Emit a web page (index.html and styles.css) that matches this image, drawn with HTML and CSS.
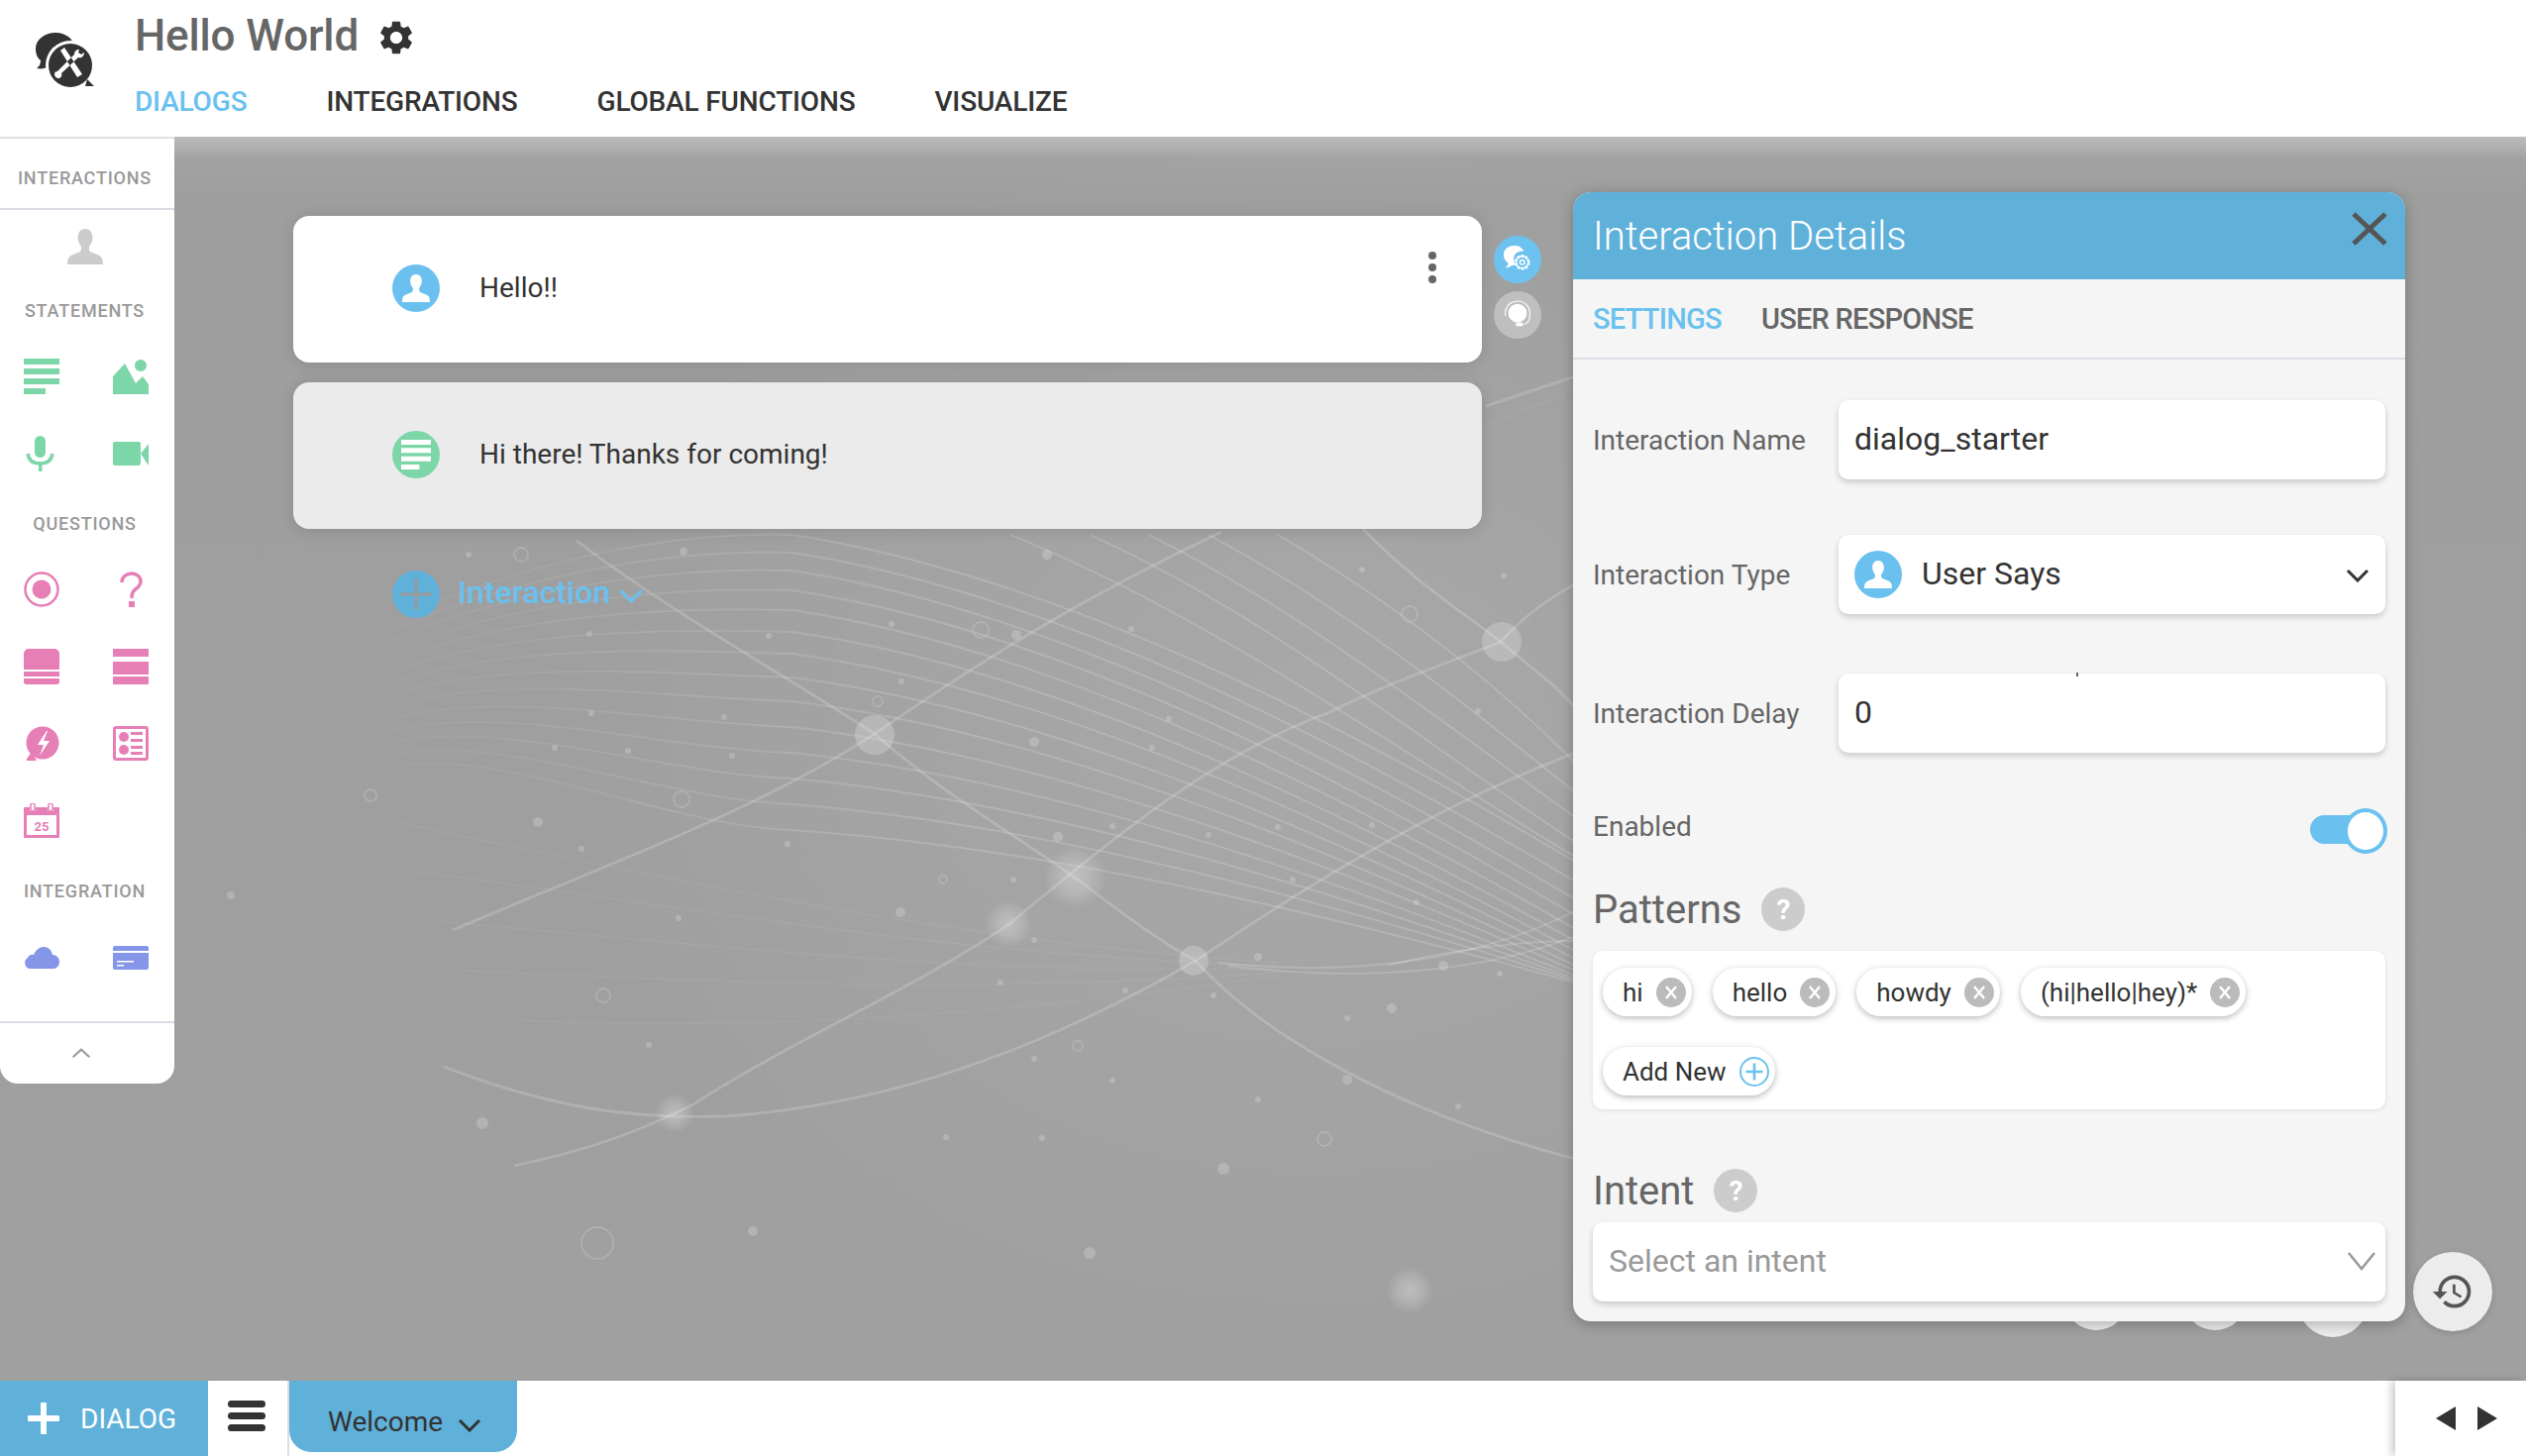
FILE: index.html
```
<!DOCTYPE html>
<html lang="en">
<head>
<meta charset="utf-8">
<title>Hello World</title>
<link rel="stylesheet" href="styles.css">
</head>
<body>
<svg class="defs" width="0" height="0">
  <symbol id="person" viewBox="0 0 36 36"><path d="M18 0c5 0 7.500 4 7.500 9 0 4-2 7-3.500 9v3c0 2 3 3 7 4.500 4 1.500 7 3 7 10.500H0c0-7.500 3-9 7-10.500 4-1.500 7-2.500 7-4.500v-3c-1.500-2-3.500-5-3.500-9 0-5 2.500-9 7.500-9z"/></symbol>
  <symbol id="chev" viewBox="0 0 24 14"><path d="M2 2l10 10L22 2" fill="none" stroke="currentColor" stroke-width="3"/></symbol>
  <symbol id="lines" viewBox="0 0 36 36"><path d="M0 0h36v6H0zM0 10h36v6H0zM0 20h36v6H0zM0 30h22v6H0z"/></symbol>
</svg>

<header class="topbar">
  <svg class="logo" viewBox="0 0 60 58">
    <path d="M21 0c11 0 19 7 19 15 0 9-8 17-19 17-3 0-5 0-7 2-3 2-7 3-12 2 3-2 4-5 4-8C2 25 1 20 1 16 1 7 10 0 21 0z" fill="#333"/>
    <circle cx="36" cy="33" r="25" fill="#fff"/>
    <circle cx="36" cy="33" r="22" fill="#333"/>
    <path d="M53 47l7 7-9 0z" fill="#333"/>
    <path d="M26 18l4-3 18 27-5 3zM45 17c-3 0-5 2-5 5l-17 17c-2 0-3 1-3 3s2 4 4 4 4-2 3-5l17-16c3 1 6-1 6-5l-3 2-3-2 1-3z" fill="#fff"/>
  </svg>
  <div class="titles">
    <div class="app-title">
      <span class="app-name">Hello World</span>
      <svg class="gear" viewBox="2 2 20 20"><path d="M19.140 12.940c.04-.3.06-.61.06-.94 0-.32-.02-.64-.07-.94l2.030-1.580c.18-.14.23-.41.12-.61l-1.920-3.320c-.12-.22-.37-.29-.59-.22l-2.390.96c-.5-.38-1.030-.7-1.620-.94l-.36-2.540c-.04-.24-.24-.41-.48-.41h-3.840c-.24 0-.43.17-.47.41l-.36 2.540c-.59.24-1.130.57-1.620.94l-2.390-.96c-.22-.08-.47 0-.59.22L2.740 8.870c-.12.21-.08.47.12.61l2.030 1.580c-.05.3-.09.63-.09.94s.02.64.07.94l-2.030 1.580c-.18.14-.23.41-.12.61l1.920 3.320c.12.22.37.29.59.22l2.390-.96c.5.38 1.030.7 1.620.94l.36 2.540c.05.24.24.41.48.41h3.840c.24 0 .44-.17.47-.41l.36-2.540c.59-.24 1.130-.56 1.620-.94l2.390.96c.22.08.47 0 .59-.22l1.920-3.320c.12-.22.07-.47-.12-.61l-2.010-1.580zM12 15.600c-1.980 0-3.600-1.620-3.600-3.600s1.620-3.600 3.600-3.600 3.600 1.620 3.600 3.600-1.620 3.600-3.600 3.600z"/></svg>
    </div>
    <nav class="nav">
      <a class="nav-item active">DIALOGS</a>
      <a class="nav-item">INTEGRATIONS</a>
      <a class="nav-item">GLOBAL FUNCTIONS</a>
      <a class="nav-item">VISUALIZE</a>
    </nav>
  </div>
</header>

<main class="stage">
  <svg class="network" viewBox="0 138 2550 1256" preserveAspectRatio="none">
    <defs>
      <radialGradient id="glow"><stop offset="0" stop-color="#fff" stop-opacity=".3"/><stop offset=".5" stop-color="#fff" stop-opacity=".18"/><stop offset="1" stop-color="#fff" stop-opacity="0"/></radialGradient>
      <radialGradient id="sheen" cx=".5" cy=".5" r=".5"><stop offset="0" stop-color="#fff" stop-opacity=".1"/><stop offset="1" stop-color="#fff" stop-opacity="0"/></radialGradient>
      <linearGradient id="fade" gradientUnits="userSpaceOnUse" x1="300" y1="0" x2="1000" y2="0"><stop offset="0" stop-color="#fff" stop-opacity="0"/><stop offset=".5" stop-color="#fff" stop-opacity=".1"/><stop offset="1" stop-color="#fff" stop-opacity=".17"/></linearGradient>
    </defs>
    <ellipse cx="1330" cy="730" rx="780" ry="620" fill="url(#sheen)"/>
    <g class="strands" stroke="url(#fade)">
      <path d="M300 680C420 600 620 535 800 540C1060 580 1340 721 1590 870"/>
      <path d="M302 687C422 607 622 553 800 558C1060 598 1340 741 1590 890"/>
      <path d="M304 694C424 614 624 571 800 576C1060 616 1340 759 1590 908"/>
      <path d="M306 702C426 622 626 591 800 596C1060 635 1340 776 1590 924"/>
      <path d="M308 710C428 630 628 611 800 616C1060 655 1340 793 1590 938"/>
      <path d="M310 719C430 639 630 633 800 638C1060 675 1340 810 1590 950"/>
      <path d="M312 728C432 648 632 655 800 660C1060 696 1340 825 1590 960"/>
      <path d="M314 738C434 658 634 679 800 684C1060 718 1340 840 1590 968"/>
      <path d="M316 747C436 667 636 703 800 708C1060 740 1340 855 1590 975"/>
      <path d="M318 758C438 678 638 729 800 734C1060 764 1340 869 1590 980"/>
      <path d="M320 768C440 688 640 755 800 760C1060 787 1340 884 1590 985"/>
      <path d="M322 778C442 698 642 781 800 786C1060 810 1340 897 1590 988"/>
      <path d="M324 789C444 709 644 807 800 812C1060 833 1340 910 1590 990"/>
      <path d="M326 799C446 719 646 833 800 838C1060 856 1340 923 1590 992"/>
      <path d="M1100 540C1280 620 1450 760 1590 850"/><path d="M1160 540C1320 620 1470 740 1590 825"/><path d="M1220 540C1370 620 1490 720 1590 800"/><path d="M1290 540C1410 610 1510 690 1590 770"/><path d="M1020 540C1220 620 1430 770 1590 865"/>
      <path d="M1230 972C1350 985 1480 975 1590 920"/><path d="M1240 975C1360 990 1490 985 1590 945"/><path d="M1400 975C1460 960 1530 950 1590 950"/>
    </g>
    <g class="faint">
      <path d="M400 830C640 880 950 950 1290 972"/><path d="M420 880C660 910 950 965 1290 975"/><path d="M440 930C680 950 950 985 1290 978"/><path d="M470 980C700 990 960 1005 1290 982"/><path d="M520 1030C740 1040 980 1030 1290 985"/><path d="M1590 390C1560 410 1530 415 1500 430"/>
    </g>
    <g class="bold">
      <path d="M457 939C620 870 760 820 883 741C1000 660 1100 600 1233 537"/>
      <path d="M519 1177C600 1160 650 1140 700 1115C800 1050 920 1000 1019 933C1130 840 1230 760 1340 720C1400 690 1460 670 1515 648"/>
      <path d="M448 1077C560 1120 640 1130 733 1127C900 1115 1050 1060 1207 970C1340 880 1460 810 1590 760"/>
      <path d="M582 546C680 620 790 680 883 741C950 800 1020 840 1084 885C1130 920 1170 950 1207 970C1270 1040 1400 1120 1590 1170"/>
      <path d="M1376 534C1430 590 1480 620 1515 648C1540 670 1570 690 1590 715"/>
      <path d="M1500 410C1530 400 1560 390 1590 380"/>
      <path d="M1515 648C1540 620 1570 600 1590 590"/>
    </g>
    <g class="nodes">
      <ellipse cx="883" cy="742" rx="20" ry="20"/><ellipse cx="1516" cy="648" rx="20" ry="20"/><ellipse cx="1205" cy="970" rx="15" ry="15"/>
    </g>
    <circle cx="1085" cy="886" r="32" fill="url(#glow)"/>
    <circle cx="1018" cy="933" r="24" fill="url(#glow)"/>
    <circle cx="681" cy="1124" r="20" fill="url(#glow)"/>
    <circle cx="1423" cy="1303" r="24" fill="url(#glow)"/>
    <g class="dots">
      <circle cx="473" cy="560" r="3"/><circle cx="690" cy="557" r="4"/><circle cx="1057" cy="560" r="5"/><circle cx="1375" cy="575" r="3"/><circle cx="1518" cy="581" r="3"/>
      <circle cx="595" cy="640" r="3"/><circle cx="776" cy="642" r="3"/><circle cx="900" cy="630" r="3"/><circle cx="1026" cy="641" r="5"/><circle cx="1142" cy="635" r="3"/>
      <circle cx="910" cy="688" r="3"/><circle cx="1492" cy="718" r="3"/><circle cx="597" cy="720" r="3"/><circle cx="731" cy="724" r="3"/><circle cx="1180" cy="726" r="3"/>
      <circle cx="1044" cy="749" r="5"/><circle cx="560" cy="755" r="3"/><circle cx="634" cy="758" r="3"/><circle cx="739" cy="763" r="3"/><circle cx="1163" cy="755" r="3"/>
      <circle cx="543" cy="830" r="5"/><circle cx="587" cy="857" r="3"/><circle cx="795" cy="852" r="3"/><circle cx="1068" cy="845" r="5"/><circle cx="1123" cy="834" r="3"/><circle cx="1290" cy="835" r="3"/><circle cx="1220" cy="843" r="3"/><circle cx="1385" cy="833" r="3"/>
      <circle cx="1023" cy="888" r="3"/><circle cx="1305" cy="888" r="3"/><circle cx="1430" cy="911" r="3"/><circle cx="685" cy="927" r="3"/><circle cx="909" cy="921" r="5"/><circle cx="1044" cy="949" r="3"/><circle cx="1270" cy="966" r="4"/><circle cx="1457" cy="975" r="5"/><circle cx="1514" cy="983" r="3"/>
      <circle cx="1010" cy="992" r="3"/><circle cx="1136" cy="1000" r="3"/><circle cx="1225" cy="1005" r="3"/><circle cx="1405" cy="1018" r="5"/><circle cx="1360" cy="1028" r="3"/><circle cx="655" cy="1055" r="3"/><circle cx="1044" cy="1069" r="3"/><circle cx="1360" cy="1090" r="5"/><circle cx="1123" cy="1091" r="3"/><circle cx="1270" cy="1110" r="3"/><circle cx="1472" cy="1117" r="3"/>
      <circle cx="487" cy="1134" r="6"/><circle cx="955" cy="1148" r="3"/><circle cx="1052" cy="1149" r="3"/><circle cx="1235" cy="1180" r="6"/><circle cx="760" cy="1243" r="5"/><circle cx="1100" cy="1265" r="6"/><circle cx="233" cy="904" r="4"/>
    </g>
    <g class="rings">
      <circle cx="526" cy="560" r="7"/><circle cx="990" cy="636" r="8"/><circle cx="1423" cy="620" r="8"/><circle cx="886" cy="708" r="5"/><circle cx="688" cy="807" r="8"/><circle cx="374" cy="803" r="6"/><circle cx="952" cy="888" r="4"/><circle cx="609" cy="1005" r="7"/><circle cx="1088" cy="1056" r="5"/><circle cx="1337" cy="1150" r="7"/><circle cx="603" cy="1255" r="16"/>
    </g>
  </svg>

  <aside class="sidebar">
    <div class="side-head"><span class="side-label">INTERACTIONS</span></div>
    <div class="side-person"><svg class="ico ico-person"><use href="#person"/></svg></div>
    <div class="side-label statements">STATEMENTS</div>
    <div class="ico-grid green">
      <svg class="ico"><use href="#lines"/></svg>
      <svg class="ico" viewBox="0 0 36 36"><path d="M0 36V18L12 5l11 20 7-7 6 8v10z"/><circle cx="28" cy="7" r="6"/></svg>
      <svg class="ico" viewBox="0 0 36 36"><rect x="11" y="0" width="11" height="22" rx="5.500"/><path d="M4 18c1 7 6 10 12.500 10S28 25 29 18" fill="none" stroke="currentColor" stroke-width="3.500"/><path d="M15 28h3.500v8H15z"/></svg>
      <svg class="ico" viewBox="0 0 36 36"><rect x="0" y="6" width="28" height="24" rx="2"/><path d="M28 18l8-10v22z"/></svg>
    </div>
    <div class="side-label questions">QUESTIONS</div>
    <div class="ico-grid pink">
      <svg class="ico" viewBox="0 0 36 36"><circle cx="18" cy="18" r="16.500" fill="none" stroke="currentColor" stroke-width="2.500"/><circle cx="18" cy="18" r="9.500"/></svg>
      <svg class="ico" viewBox="0 0 36 36"><path d="M9 11C9 5 14 2 19 2c5 0 9 3.500 9 8 0 5-4 6.500-6.500 9-2 2-2.500 4-2.500 8" fill="none" stroke="currentColor" stroke-width="3.500"/><path d="M16 30h6v6h-6z"/></svg>
      <svg class="ico" viewBox="0 0 36 36"><path d="M5 0h26a5 5 0 0 1 5 5v16H0V5a5 5 0 0 1 5-5zM0 23h36v5H0zM0 30h36v3a3 3 0 0 1-3 3H3a3 3 0 0 1-3-3z"/></svg>
      <svg class="ico" viewBox="0 0 36 36"><path d="M0 0h36v8H0zM0 13h36v13H0zM0 28h36v8H0z"/></svg>
      <svg class="ico" viewBox="0 0 36 36"><circle cx="19" cy="17" r="16.500"/><path d="M3 33l5-7 5 9H3z"/><path d="M23 5l-9 14h6l-4 11 10-15h-6l4-10z" fill="#fff"/></svg>
      <svg class="ico" viewBox="0 0 36 36"><rect width="36" height="35" rx="3"/><rect x="3" y="3" width="30" height="29" fill="#fff"/><circle cx="11" cy="11" r="5"/><circle cx="11" cy="24" r="5"/><path d="M18 6h12v3H18zM18 13h12v3H18zM18 20h12v3H18zM18 26h12v3H18z"/></svg>
      <svg class="ico" viewBox="0 0 36 36"><path d="M0 4h6v4h6V4h12v4h6V4h6v31H0z"/><rect x="3" y="12" width="30" height="20" fill="#fff"/><rect x="7" y="0" width="4" height="8" rx="2" fill="#fff" stroke="currentColor" stroke-width="1.500"/><rect x="25" y="0" width="4" height="8" rx="2" fill="#fff" stroke="currentColor" stroke-width="1.500"/><text class="cal-day" x="18" y="27.500" text-anchor="middle">25</text></svg>
    </div>
    <div class="side-label integration">INTEGRATION</div>
    <div class="ico-grid purple">
      <svg class="ico ico-short" viewBox="0 0 36 24"><path d="M6 23a6 6 0 0 1-2-11c1-3 4-4 6-3 2-5 6-8 10-8 5 0 8 3 9 8 4 0 7 3 7 7s-3 7-6 7z"/></svg>
      <svg class="ico ico-short" viewBox="0 0 36 24"><path d="M2 0h32a2 2 0 0 1 2 2v3H0V2a2 2 0 0 1 2-2zM0 7h36v15a2 2 0 0 1-2 2H2a2 2 0 0 1-2-2zM4 15v1.500h17V15zM4 19v1.500h7V19z" fill-rule="evenodd"/></svg>
    </div>
    <div class="side-foot"><svg class="side-chev" viewBox="0 0 24 14"><path d="M2 12L12 3l10 9" fill="none" stroke="currentColor" stroke-width="2.500"/></svg></div>
  </aside>

  <section class="flow">
    <article class="card">
      <span class="badge blue"><svg class="badge-person"><use href="#person"/></svg></span>
      <span class="card-text">Hello!!</span>
      <span class="kebab"><i></i><i></i><i></i></span>
    </article>
    <article class="card muted">
      <span class="badge green-bg"><svg class="badge-lines"><use href="#lines"/></svg></span>
      <span class="card-text">Hi there! Thanks for coming!</span>
    </article>
    <div class="add-row">
      <span class="badge add-badge"><svg class="add-plus" viewBox="0 0 32 32"><path d="M14.500 0h3v14.500H32v3H17.500V32h-3V17.500H0v-3h14.500z"/></svg></span>
      <span class="add-text">Interaction</span>
      <svg class="add-chev"><use href="#chev"/></svg>
    </div>
  </section>

  <div class="side-actions">
    <span class="round-btn blue">
      <svg class="round-ico" viewBox="0 0 32 32"><path d="M13 1C6 1 1 5 1 11c0 4 2 7 5 9-.5 2-2 4-3 5 3 0 6-2 8-3l3 .2C13 20 12 18 12 15c0-5 4-8 9-8 1 0 1.500 0 2 .2C21 3 17 1 13 1z" fill="#fff"/><circle cx="21" cy="19" r="7" fill="none" stroke="#fff" stroke-width="2.500" stroke-dasharray="3 1.500"/><circle cx="21" cy="19" r="6.500" fill="none" stroke="#fff" stroke-width="1.500"/><circle cx="21" cy="19" r="2.500" fill="none" stroke="#fff" stroke-width="1.500"/></svg>
    </span>
    <span class="round-btn grey">
      <svg class="round-ico" viewBox="0 0 32 32"><circle cx="16" cy="14" r="10" fill="#fff"/><path d="M3 17C1 8 8 1 16 1s15 7 13 16c0 4-2 8-6 9" fill="none" stroke="#fff" stroke-width="1.200"/><rect x="14" y="24" width="8" height="4" rx="2" fill="#fff"/></svg>
    </span>
  </div>

  <span class="peek peek-a"></span>
  <span class="peek peek-b"></span>
  <span class="peek peek-c"></span>

  <section class="panel">
    <div class="panel-head">
      <h2 class="panel-title">Interaction Details</h2>
      <svg class="panel-close" viewBox="0 0 36 34"><path d="M2 2l32 30M34 2L2 32" fill="none" stroke="currentColor" stroke-width="5"/></svg>
    </div>
    <div class="panel-tabs">
      <span class="ptab active">SETTINGS</span>
      <span class="ptab">USER RESPONSE</span>
    </div>
    <div class="panel-body">
      <div class="field"><label class="field-label">Interaction Name</label><div class="input">dialog_starter</div></div>
      <div class="field f-type"><label class="field-label">Interaction Type</label>
        <div class="input">
          <span class="badge blue sel-badge"><svg class="badge-person"><use href="#person"/></svg></span>
          <span class="input-val">User Says</span>
          <svg class="sel-chev"><use href="#chev"/></svg>
        </div>
      </div>
      <div class="field f-delay"><label class="field-label">Interaction Delay</label><div class="input delay">0</div></div>
      <div class="enabled-row">
        <span class="field-label enabled-label">Enabled</span>
        <span class="toggle"><i class="knob"></i></span>
      </div>
      <div class="section-head patterns"><span class="section-title">Patterns</span><span class="help">?</span></div>
      <div class="chip-box">
        <span class="chip">hi<i class="chip-x"><svg viewBox="0 0 14 14"><path d="M2 1l10 12M12 1L2 13" fill="none" stroke="#fff" stroke-width="2.400"/></svg></i></span>
        <span class="chip">hello<i class="chip-x"><svg viewBox="0 0 14 14"><path d="M2 1l10 12M12 1L2 13" fill="none" stroke="#fff" stroke-width="2.400"/></svg></i></span>
        <span class="chip">howdy<i class="chip-x"><svg viewBox="0 0 14 14"><path d="M2 1l10 12M12 1L2 13" fill="none" stroke="#fff" stroke-width="2.400"/></svg></i></span>
        <span class="chip">(hi|hello|hey)*<i class="chip-x"><svg viewBox="0 0 14 14"><path d="M2 1l10 12M12 1L2 13" fill="none" stroke="#fff" stroke-width="2.400"/></svg></i></span>
        <span class="chip add-chip">Add New<i class="chip-add"><svg viewBox="0 0 14 14"><path d="M7 1v12M1 7h12" fill="none" stroke="#6ac1ef" stroke-width="1.800"/></svg></i></span>
      </div>
      <div class="section-head intent"><span class="section-title">Intent</span><span class="help">?</span></div>
      <div class="input intent-select">
        <span class="placeholder">Select an intent</span>
        <svg class="intent-chev" viewBox="0 0 28 20"><path d="M1 2l13 16L27 2" fill="none" stroke="currentColor" stroke-width="2.500"/></svg>
      </div>
    </div>
  </section>

  <div class="history">
    <svg class="history-ico" viewBox="0 0 24 24"><path d="M13 3a9 9 0 0 0-9 9H1l3.890 3.890.07.14L9 12H6c0-3.870 3.130-7 7-7s7 3.130 7 7-3.130 7-7 7c-1.930 0-3.680-.79-4.940-2.060l-1.420 1.420A8.954 8.954 0 0 0 13 21a9 9 0 0 0 0-18zm-1 5v5l4.280 2.540.72-1.210-3.500-2.080V8H12z"/></svg>
  </div>
</main>

<footer class="bottombar">
  <button class="new-dialog">
    <svg class="plus" viewBox="0 0 32 32"><path d="M16 2v28M2 16h28" fill="none" stroke="#fff" stroke-width="6" stroke-linecap="round"/></svg>
    <span>DIALOG</span>
  </button>
  <div class="burger"><i></i><i></i><i></i></div>
  <div class="dialog-tab"><span>Welcome</span><svg class="tab-chev"><use href="#chev"/></svg></div>
  <div class="pager">
    <svg class="arrow" viewBox="0 0 20 24"><path d="M20 0v24L0 12z"/></svg>
    <svg class="arrow" viewBox="0 0 20 24"><path d="M0 0v24l20-12z"/></svg>
  </div>
</footer>
</body>
</html>
```
FILE: styles.css
```
* { box-sizing: border-box; }
html, body { margin: 0; height: 100%; }
body {
  width: 2550px;
  height: 1470px;
  overflow: hidden;
  display: flex;
  flex-direction: column;
  font-family: Roboto, "Liberation Sans", sans-serif;
  color: #333;
  background: #fff;
}
.defs { position: absolute; }
i { display: block; font-style: normal; }

/* header */
.topbar { height: 138px; flex: none; display: flex; background: #fff; }
.logo { width: 60px; height: 58px; margin: 33px 0 0 35px; flex: none; }
.titles { margin-left: 41px; display: flex; flex-direction: column; }
.app-title { display: flex; align-items: center; height: 52px; margin-top: 10px; }
.app-name { font-size: 44px; font-weight: 500; color: #666; letter-spacing: -.15px; }
.gear { width: 34px; height: 34px; margin-left: 21px; margin-top: 4px; fill: #333; }
.nav { display: flex; gap: 80px; margin-top: 20px; }
.nav-item { font-size: 28px; font-weight: 500; line-height: 41px; letter-spacing: -.16px; color: #333; }
.nav-item.active { color: #6ac1ef; }

/* stage */
.stage {
  position: relative;
  flex: 1;
  display: flex;
  align-items: flex-start;
  background: linear-gradient(#bcbcbc 0, #a2a2a2 22px, #9e9e9e 60px, #a0a0a0 100%);
  overflow: hidden;
}
.network { position: absolute; left: 0; top: 0; width: 2550px; height: 1256px; }
.strands path { fill: none; stroke-width: 1.800; }
.faint path { fill: none; stroke: rgba(255,255,255,.06); stroke-width: 1.400; }
.bold path { fill: none; stroke: rgba(255,255,255,.18); stroke-width: 2.800; }
.nodes ellipse { fill: rgba(255,255,255,.22); }
.dots circle { fill: rgba(255,255,255,.2); }
.rings circle { fill: none; stroke: rgba(255,255,255,.16); stroke-width: 1.800; }

/* sidebar */
.sidebar {
  position: relative;
  flex: none;
  width: 176px;
  height: 956px;
  background: #fff;
  border-top: 2px solid #e0e0e6;
  border-bottom-right-radius: 18px;
  border-bottom-left-radius: 18px;
  display: flex;
  flex-direction: column;
  overflow: hidden;
}
.side-head { height: 72px; padding-top: 30px; border-bottom: 2px solid #dcdce4; text-align: center; }
.side-label { display: block; font-size: 18px; font-weight: 500; line-height: 20px; color: #999; text-align: center; letter-spacing: .8px; padding-right: 5px; }
.side-person { height: 36px; margin-top: 19px; padding-left: 68px; }
.ico { width: 36px; height: 36px; display: block; fill: currentColor; }
.ico-person { fill: #ccc; }
.statements { margin-top: 37px; }
.questions { margin-top: 43px; }
.integration { margin-top: 43px; }
.ico-grid { display: grid; grid-template-columns: 36px 36px; column-gap: 54px; row-gap: 42px; padding-left: 24px; margin-top: 38px; }
.ico-short { height: 24px; }
.green { color: #7dd6a8; }
.pink { color: #e67fb6; margin-top: 38px; }
.purple { color: #8595e8; margin-top: 45px; }
.cal-day { font-family: Roboto, sans-serif; font-size: 13px; font-weight: 700; fill: currentColor; }
.side-foot { margin-top: auto; height: 63px; border-top: 2px solid #dcdce4; display: flex; justify-content: center; padding: 24px 12px 0 0; }
.side-chev { width: 20px; height: 12px; color: #999; }

/* flow */
.flow { position: relative; flex: none; width: 1200px; margin: 80px 0 0 120px; display: flex; flex-direction: column; gap: 20px; }
.card {
  position: relative;
  height: 148px;
  border-radius: 16px;
  background: #fff;
  box-shadow: 0 2px 16px rgba(0,0,0,.12);
  display: flex;
  align-items: center;
  padding-left: 100px;
}
.card.muted { background: #ebebeb; }
.card .badge { margin-bottom: 3px; }
.card-text { margin-left: 40px; font-size: 28px; color: #333; padding-bottom: 3px; }
.badge { width: 48px; height: 48px; border-radius: 50%; display: flex; align-items: center; justify-content: center; flex: none; }
.blue { background: #6ac1ef; }
.green-bg { background: #7dd6a8; }
.badge-person { width: 28px; height: 28px; fill: #fff; }
.badge-lines { width: 30px; height: 30px; fill: #fff; }
.kebab { position: absolute; left: 1146px; top: 36px; display: flex; flex-direction: column; gap: 4px; }
.kebab i { width: 8px; height: 8px; border-radius: 50%; background: #666; }
.add-row { display: flex; align-items: center; margin: 22px 0 0 100px; height: 48px; }
.add-badge { background: #5fb1da; }
.add-plus { width: 32px; height: 32px; fill: #9a9a9a; }
.add-text { margin-left: 18px; font-size: 32px; font-weight: 500; color: #6ac1ef; padding-bottom: 4px; }
.add-chev { width: 26px; height: 15px; margin: 2px 0 0 8px; color: #6ac1ef; }

/* round actions */
.side-actions { flex: none; margin: 100px 0 0 12px; display: flex; flex-direction: column; gap: 8px; }
.round-btn { width: 48px; height: 48px; border-radius: 50%; display: flex; align-items: center; justify-content: center; }
.round-btn.grey { background: #bdbdbd; }
.round-ico { width: 30px; height: 30px; }
.peek { position: absolute; background: #ececec; border-radius: 50%; width: 64px; height: 64px; }
.peek-a { left: 2084px; top: 1141px; }
.peek-b { left: 2204px; top: 1141px; }
.peek-c { left: 2320px; top: 1142px; width: 70px; height: 70px; }

/* panel */
.panel {
  position: relative;
  flex: none;
  width: 840px;
  height: 1140px;
  margin: 56px 0 0 32px;
  border-radius: 18px;
  background: #f5f5f5;
  box-shadow: 0 3px 14px rgba(0,0,0,.25);
  overflow: hidden;
  display: flex;
  flex-direction: column;
}
.panel-head { height: 88px; background: #5fb1da; display: flex; align-items: center; justify-content: space-between; padding: 0 18px 0 20px; flex: none; }
.panel-title { margin: 0; font-size: 40px; font-weight: 300; color: #fff; line-height: 88px; padding-top: 2px; }
.panel-close { width: 36px; height: 34px; margin-top: -14px; color: #555; }
.panel-tabs { height: 81px; border-bottom: 2px solid #dcdce4; padding-left: 20px; display: flex; align-items: center; gap: 40px; flex: none; }
.ptab { font-size: 29px; font-weight: 500; color: #666; letter-spacing: -.75px; padding-top: 1px; }
.ptab.active { color: #6ac1ef; }
.panel-body { padding: 41px 20px 0; flex: 1; }
.field { display: flex; align-items: center; }
.f-type { margin-top: 56px; }
.f-delay { margin-top: 60px; }
.field-label { width: 248px; flex: none; font-size: 28px; color: #666; }
.enabled-label { padding-bottom: 10px; }
.input {
  position: relative;
  flex: 1;
  height: 80px;
  background: #fff;
  border-radius: 10px;
  box-shadow: 0 3px 6px rgba(0,0,0,.18);
  padding: 0 16px 2px;
  display: flex;
  align-items: center;
  font-size: 32px;
  color: #333;
}
.delay::before { content: ""; position: absolute; left: 240px; top: -1px; width: 2px; height: 4px; background: #666; }
.sel-badge { margin-right: 20px; margin-top: 2px; }
.sel-chev { width: 24px; height: 14px; margin-left: auto; margin-right: 0; margin-top: 4px; color: #333; }
.enabled-row { display: flex; justify-content: space-between; align-items: center; height: 46px; margin-top: 56px; }
.toggle { position: relative; width: 76px; height: 46px; display: block; }
.toggle::before { content: ""; position: absolute; left: 0; top: 7px; width: 60px; height: 29px; border-radius: 15px; background: #6ac1ef; }
.knob { position: absolute; right: -2px; top: 0; width: 44px; height: 46px; border-radius: 50%; background: #fff; border: 4px solid #6ac1ef; }
.section-head { display: flex; align-items: center; gap: 20px; height: 44px; }
.patterns { margin-top: 34px; }
.intent { margin-top: 60px; }
.section-title { font-size: 40px; color: #666; }
.help { width: 44px; height: 44px; border-radius: 50%; background: #ccc; color: #fff; font-size: 28px; font-weight: 700; display: flex; align-items: center; justify-content: center; }
.chip-box { margin-top: 20px; height: 160px; background: #fff; border-radius: 10px; box-shadow: 0 1px 4px rgba(0,0,0,.1); padding: 17px 10px 0; display: flex; flex-wrap: wrap; align-content: flex-start; gap: 31px 21px; }
.chip { height: 49px; border-radius: 25px; background: #fff; box-shadow: 0 2px 6px rgba(0,0,0,.28); display: flex; align-items: center; padding: 0 6px 0 20px; font-size: 26px; color: #333; }
.add-chip { flex: none; }
.chip-x { width: 30px; height: 30px; margin-left: 13px; border-radius: 50%; background: #bbb; display: flex; align-items: center; justify-content: center; }
.chip-x svg { width: 14px; height: 14px; }
.chip-add { width: 30px; height: 30px; margin-left: 13px; border-radius: 50%; border: 2.500px solid #6ac1ef; display: flex; align-items: center; justify-content: center; }
.chip-add svg { width: 20px; height: 20px; }
.chip-box .chip:last-child { margin-right: 400px; }
.intent-select { margin-top: 10px; height: 80px; }
.placeholder { color: #999; }
.intent-chev { width: 28px; height: 20px; margin-left: auto; margin-right: -6px; color: #999; }

.history { flex: none; width: 80px; height: 80px; margin: 1126px 0 0 8px; border-radius: 50%; background: #ececec; display: flex; align-items: center; justify-content: center; box-shadow: 0 2px 6px rgba(0,0,0,.15); }
.history-ico { width: 44px; height: 44px; fill: #555; }

/* bottom bar */
.bottombar { height: 76px; flex: none; display: flex; background: #fff; position: relative; }
.new-dialog { width: 210px; height: 76px; border: 0; padding: 0 0 0 28px; background: #5fb1da; color: #fff; font: 400 28px Roboto, sans-serif; display: flex; align-items: center; gap: 21px; }
.plus { width: 32px; height: 32px; }
.burger { width: 82px; border-right: 2px solid #dcdce4; padding: 20px 0 0 20px; display: flex; flex-direction: column; gap: 5px; flex: none; }
.burger i { width: 38px; height: 7px; border-radius: 4px; background: #333; }
.dialog-tab { width: 230px; height: 72px; background: #5fb1da; border-radius: 0 0 22px 22px; display: flex; align-items: center; padding: 11px 0 0 39px; font-size: 28px; color: #333; }
.tab-chev { width: 24px; height: 14px; margin: 6px 0 0 15px; color: #333; }
.pager { margin-left: auto; width: 132px; box-shadow: -4px 0 8px rgba(0,0,0,.2); display: flex; align-items: center; gap: 22px; padding: 0 0 0 41px; background: #fff; }
.arrow { width: 20px; height: 24px; fill: #333; }
```
